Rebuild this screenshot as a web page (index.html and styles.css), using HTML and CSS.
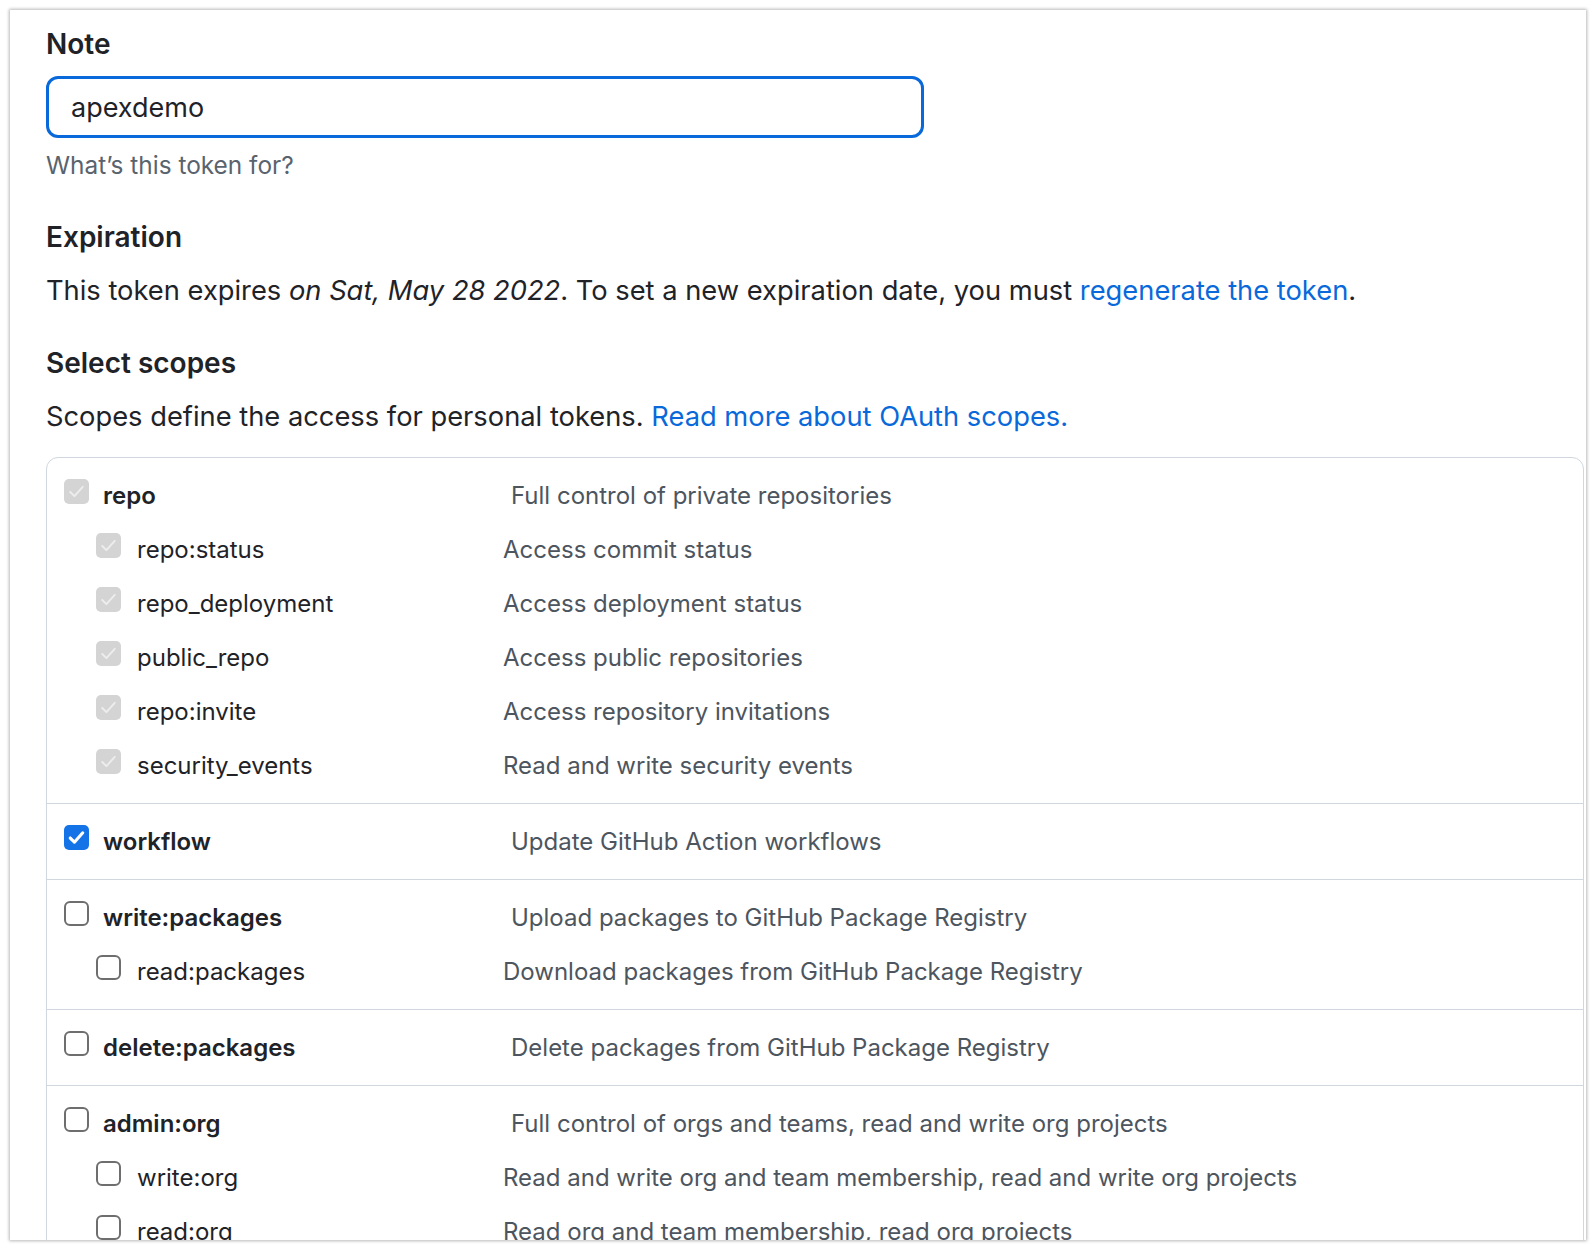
FILE: index.html
```html
<!DOCTYPE html>
<html lang="en">
<head>
<meta charset="utf-8">
<title>Personal access token</title>
<link rel="stylesheet" href="styles.css">
</head>
<body>
<div class="window">
  <div class="content">
    <label class="label" for="note">Note</label>
    <input id="note" class="note-input" type="text" value="apexdemo">
    <p class="hint">What’s this token for?</p>

    <h3 class="label h-exp">Expiration</h3>
    <p class="para">This token expires <em>on Sat, May 28 2022</em>. To set a new expiration date, you must <a href="#">regenerate the token</a>.</p>

    <h3 class="label h-scopes">Select scopes</h3>
    <p class="para para2">Scopes define the access for personal tokens. <a href="#">Read more about OAuth scopes.</a></p>

    <div class="scopes">
      <ul class="group">
        <li class="row main"><span class="cb cb-disabled"><svg viewBox="0 0 24 24"><path d="M6 12.5l4 4 8-9"/></svg></span><span class="name">repo</span><span class="desc">Full control of private repositories</span></li>
        <li class="row sub"><span class="cb cb-disabled"><svg viewBox="0 0 24 24"><path d="M6 12.5l4 4 8-9"/></svg></span><span class="name">repo:status</span><span class="desc">Access commit status</span></li>
        <li class="row sub"><span class="cb cb-disabled"><svg viewBox="0 0 24 24"><path d="M6 12.5l4 4 8-9"/></svg></span><span class="name">repo_deployment</span><span class="desc">Access deployment status</span></li>
        <li class="row sub"><span class="cb cb-disabled"><svg viewBox="0 0 24 24"><path d="M6 12.5l4 4 8-9"/></svg></span><span class="name">public_repo</span><span class="desc">Access public repositories</span></li>
        <li class="row sub"><span class="cb cb-disabled"><svg viewBox="0 0 24 24"><path d="M6 12.5l4 4 8-9"/></svg></span><span class="name">repo:invite</span><span class="desc">Access repository invitations</span></li>
        <li class="row sub"><span class="cb cb-disabled"><svg viewBox="0 0 24 24"><path d="M6 12.5l4 4 8-9"/></svg></span><span class="name">security_events</span><span class="desc">Read and write security events</span></li>
      </ul>
      <ul class="group">
        <li class="row main"><span class="cb cb-checked"><svg viewBox="0 0 24 24"><path d="M6 12.5l4 4 8-9"/></svg></span><span class="name">workflow</span><span class="desc">Update GitHub Action workflows</span></li>
      </ul>
      <ul class="group">
        <li class="row main"><span class="cb"></span><span class="name">write:packages</span><span class="desc">Upload packages to GitHub Package Registry</span></li>
        <li class="row sub"><span class="cb"></span><span class="name">read:packages</span><span class="desc">Download packages from GitHub Package Registry</span></li>
      </ul>
      <ul class="group">
        <li class="row main"><span class="cb"></span><span class="name">delete:packages</span><span class="desc">Delete packages from GitHub Package Registry</span></li>
      </ul>
      <ul class="group">
        <li class="row main"><span class="cb"></span><span class="name">admin:org</span><span class="desc">Full control of orgs and teams, read and write org projects</span></li>
        <li class="row sub"><span class="cb"></span><span class="name">write:org</span><span class="desc">Read and write org and team membership, read and write org projects</span></li>
        <li class="row sub"><span class="cb"></span><span class="name">read:org</span><span class="desc">Read org and team membership, read org projects</span></li>
      </ul>
    </div>
  </div>
</div>
</body>
</html>
```

FILE: styles.css
```css
html, body {
  margin: 0;
  background: #ffffff;
}

body {
  font-family: Inter, "Noto Sans", "Liberation Sans", sans-serif;
  color: #1f2328;
}

.window {
  margin: 10px;
  width: 1576px;
  height: 1230px;
  overflow: hidden;
  background: #ffffff;
  box-shadow: 0 0 3px 1px rgba(0, 0, 0, 0.28);
  box-sizing: border-box;
  padding: 16px 0 0 36px;
}

.label {
  display: block;
  margin: 0;
  font-size: 28px;
  line-height: 36px;
  font-weight: 600;
  color: #1f2328;
}

.note-input {
  display: block;
  margin: 14px 0 0;
  width: 878px;
  height: 62px;
  box-sizing: border-box;
  border: 3px solid #0969da;
  border-radius: 12px;
  padding: 0 0 0 22px;
  font-family: Inter, "Noto Sans", sans-serif;
  font-size: 27px;
  color: #1f2328;
  outline: none;
  background: #ffffff;
}

.hint {
  margin: 11px 0 0;
  font-size: 24.4px;
  line-height: 32px;
  color: #59636e;
}

.h-exp {
  margin-top: 38px;
}

.para {
  margin: 16px 0 0;
  font-size: 27.3px;
  line-height: 40px;
  color: #1f2328;
}

.para a {
  color: #0969da;
  text-decoration: none;
}

.h-scopes {
  margin-top: 34px;
}

.para2 {
  margin-top: 16px;
}

.scopes {
  margin-top: 20px;
  width: 1536px;
  border: 1px solid #d0d7de;
  border-radius: 12px;
}

.group {
  list-style: none;
  margin: 0;
  padding: 11px 0 10px 17px;
  border-top: 1px solid #d0d7de;
}

.group:first-child {
  border-top: 0;
}

.row {
  display: flex;
  align-items: flex-start;
  height: 54px;
}

.sub {
  padding-left: 32px;
}

.cb {
  flex: none;
  width: 25px;
  height: 25px;
  margin-top: 10px;
  box-sizing: border-box;
  border: 2px solid #6e6e6e;
  border-radius: 6px;
  background: #ffffff;
}

.cb svg {
  display: block;
  width: 100%;
  height: 100%;
  fill: none;
  stroke-linecap: round;
  stroke-linejoin: round;
}

.cb-disabled {
  border: 0;
  background: #d4d4d4;
  border-radius: 5px;
}

.cb-disabled svg {
  stroke: #ededed;
  stroke-width: 1.8;
}

.cb-checked {
  border: 0;
  background: #1473e6;
  border-radius: 5px;
}

.cb-checked svg {
  stroke: #ffffff;
  stroke-width: 3;
}

.name {
  flex: none;
  width: 408px;
  margin-left: 14px;
  font-size: 24px;
  line-height: 54px;
  color: #1f2328;
}

.main .name {
  font-weight: 600;
}

.sub .name {
  width: 366px;
  margin-left: 16px;
}

.desc {
  font-size: 24px;
  line-height: 54px;
  color: #4d555e;
  white-space: nowrap;
}
```
